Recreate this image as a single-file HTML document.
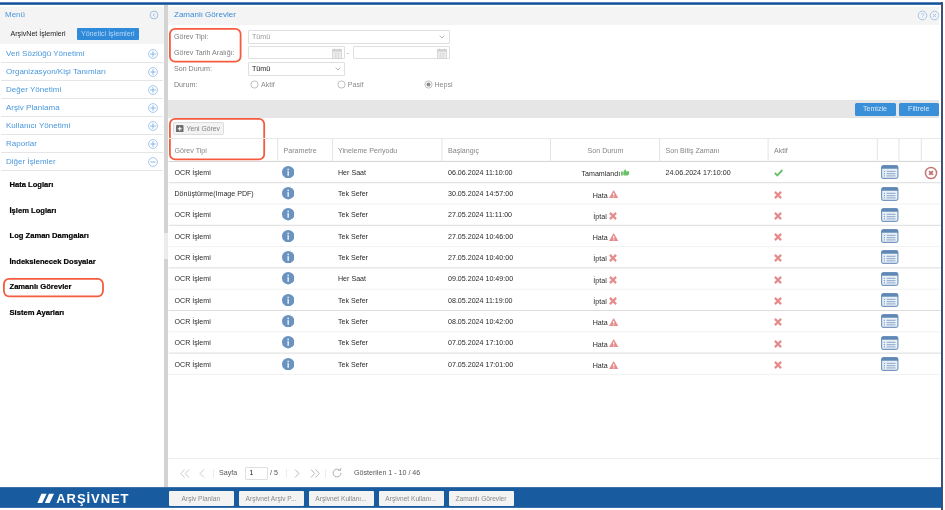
<!DOCTYPE html><html lang="tr"><head><meta charset="utf-8"><title>Zamanlı Görevler</title><style>
*{box-sizing:border-box;margin:0;padding:0}
html,body{width:945px;height:510px;overflow:hidden;background:#fff}
body{position:relative;filter:blur(0.5px);font-family:"Liberation Sans",sans-serif;font-size:7.1px;color:#333;line-height:1}
.a{position:absolute}
.t{position:absolute;white-space:nowrap;line-height:10px;height:10px}
.acc{font-size:8px;letter-spacing:0.02px;color:#4a98dc;left:6px}
.sep{position:absolute;left:1px;width:162px;height:1px;background:#e5e5e5}
.sub{font-weight:bold;font-size:7.6px;color:#000;-webkit-text-stroke:0.2px #000;left:9.5px}
.lbl{color:#7d7d7d;left:174px}
.inp{position:absolute;border:1px solid #dfdfdf;background:#fff;border-radius:1px}
.hd{color:#868686;top:145.6px}
.c{color:#2a2a2a}
.tb{position:absolute;top:491px;height:15px;width:65px;background:#f3f3f3;border-radius:1px;color:#8a8a8a;text-align:center;line-height:15px;font-size:6.6px;white-space:nowrap}
.btn{position:absolute;top:102.5px;height:13px;background:#3a8fd9;border-radius:1.5px;color:#d6e8f8;text-align:center;line-height:13px;font-size:7.1px}
</style></head><body>
<svg class="a" style="left:0;top:0" width="945" height="8" viewBox="0 0 945 8"><rect x="-2" y="2.3" width="945" height="2.5" fill="#11509a"/></svg>
<div class="a" style="left:941px;top:2px;width:2px;height:508px;background:#3f4f76"></div>
<div class="a" style="left:-4px;top:6.5px;width:168px;height:37px;background:#f4f4f4"></div>
<div class="t" style="left:5px;top:9.5px;font-size:8px;color:#4a98dc">Menü</div>
<svg class="a" style="left:149px;top:9.5px" width="10" height="10" viewBox="0 0 10 10"><circle cx="5" cy="5" r="3.9" fill="none" stroke="#8db4e0" stroke-width="0.8"/><path d="M5.7 3.4 L4.1 5 L5.7 6.6" fill="none" stroke="#8db4e0" stroke-width="0.8"/></svg>
<div class="t" style="left:10.5px;top:29px;font-size:7.1px;color:#222">ArşivNet İşlemleri</div>
<div class="a" style="left:76.5px;top:28px;width:62.5px;height:12px;background:#2f8ad9;border-radius:1px"></div>
<div class="t" style="left:76.5px;top:29px;width:62.5px;text-align:center;font-size:7.1px;color:#b9d8f5">Yönetici İşlemleri</div>
<div class="t acc" style="top:48.5px">Veri Sözlüğü Yönetimi</div>
<svg class="a" style="left:147.8px;top:48.8px" width="10" height="10" viewBox="0 0 10 10"><circle cx="5" cy="5" r="4.4" fill="none" stroke="#8fbbe9" stroke-width="0.8"/><path d="M2.2 5 H7.8 M5 2.2 V7.8" stroke="#7fb0e4" stroke-width="0.9"/></svg>
<div class="sep" style="top:62px"></div>
<div class="t acc" style="top:66.5px">Organizasyon/Kişi Tanımları</div>
<svg class="a" style="left:147.8px;top:66.8px" width="10" height="10" viewBox="0 0 10 10"><circle cx="5" cy="5" r="4.4" fill="none" stroke="#8fbbe9" stroke-width="0.8"/><path d="M2.2 5 H7.8 M5 2.2 V7.8" stroke="#7fb0e4" stroke-width="0.9"/></svg>
<div class="sep" style="top:80px"></div>
<div class="t acc" style="top:84.5px">Değer Yönetimi</div>
<svg class="a" style="left:147.8px;top:84.8px" width="10" height="10" viewBox="0 0 10 10"><circle cx="5" cy="5" r="4.4" fill="none" stroke="#8fbbe9" stroke-width="0.8"/><path d="M2.2 5 H7.8 M5 2.2 V7.8" stroke="#7fb0e4" stroke-width="0.9"/></svg>
<div class="sep" style="top:98px"></div>
<div class="t acc" style="top:102.5px">Arşiv Planlama</div>
<svg class="a" style="left:147.8px;top:102.8px" width="10" height="10" viewBox="0 0 10 10"><circle cx="5" cy="5" r="4.4" fill="none" stroke="#8fbbe9" stroke-width="0.8"/><path d="M2.2 5 H7.8 M5 2.2 V7.8" stroke="#7fb0e4" stroke-width="0.9"/></svg>
<div class="sep" style="top:116px"></div>
<div class="t acc" style="top:120.5px">Kullanıcı Yönetimi</div>
<svg class="a" style="left:147.8px;top:120.8px" width="10" height="10" viewBox="0 0 10 10"><circle cx="5" cy="5" r="4.4" fill="none" stroke="#8fbbe9" stroke-width="0.8"/><path d="M2.2 5 H7.8 M5 2.2 V7.8" stroke="#7fb0e4" stroke-width="0.9"/></svg>
<div class="sep" style="top:134px"></div>
<div class="t acc" style="top:138.5px">Raporlar</div>
<svg class="a" style="left:147.8px;top:138.8px" width="10" height="10" viewBox="0 0 10 10"><circle cx="5" cy="5" r="4.4" fill="none" stroke="#8fbbe9" stroke-width="0.8"/><path d="M2.2 5 H7.8 M5 2.2 V7.8" stroke="#7fb0e4" stroke-width="0.9"/></svg>
<div class="sep" style="top:152px"></div>
<div class="t acc" style="top:156.5px">Diğer İşlemler</div>
<svg class="a" style="left:147.8px;top:156.8px" width="10" height="10" viewBox="0 0 10 10"><circle cx="5" cy="5" r="4.4" fill="none" stroke="#8fbbe9" stroke-width="0.8"/><path d="M2.4 5 H7.6" stroke="#7fb0e4" stroke-width="0.9"/></svg>
<div class="sep" style="top:170px"></div>
<div class="t sub" style="top:179.6px">Hata Logları</div>
<div class="t sub" style="top:205.6px">İşlem Logları</div>
<div class="t sub" style="top:231.3px">Log Zaman Damgaları</div>
<div class="t sub" style="top:256.7px">İndekslenecek Dosyalar</div>
<div class="t sub" style="top:282.1px">Zamanlı Görevler</div>
<div class="t sub" style="top:308.1px">Sistem Ayarları</div>
<svg class="a" style="left:2.3px;top:276.6px" width="102.9" height="21.2" viewBox="0 0 102.9 21.2"><rect x="1.9" y="1.9" width="99.1" height="17.4" rx="5.2" fill="none" stroke="#f55c3e" stroke-width="1.8"/></svg>
<div class="a" style="left:164.3px;top:5px;width:4px;height:482px;background:#d3d3d3"></div>
<div class="a" style="left:164.3px;top:233px;width:4px;height:26px;background:#ececec"></div>
<div class="a" style="left:168px;top:6.5px;width:771px;height:18px;background:#f4f4f4"></div>
<div class="t" style="left:174px;top:10.4px;font-size:8px;color:#3b8ad6">Zamanlı Görevler</div>
<svg class="a" style="left:916.5px;top:9.5px" width="11" height="11" viewBox="0 0 11 11"><circle cx="5.5" cy="5.5" r="4.3" fill="none" stroke="#9dbfe6" stroke-width="0.9"/><text x="5.5" y="8" font-size="6.5" text-anchor="middle" fill="#9dbfe6" font-family="Liberation Sans, sans-serif">?</text></svg>
<svg class="a" style="left:928.5px;top:9.5px" width="11" height="11" viewBox="0 0 11 11"><circle cx="5.5" cy="5.5" r="4.3" fill="none" stroke="#9dbfe6" stroke-width="0.9"/><path d="M3.9 3.9 L7.1 7.1 M7.1 3.9 L3.9 7.1" stroke="#9dbfe6" stroke-width="0.9"/></svg>
<div class="t lbl" style="top:32px">Görev Tipi:</div>
<div class="t lbl" style="top:48px">Görev Tarih Aralığı:</div>
<div class="t lbl" style="top:64px">Son Durum:</div>
<div class="t lbl" style="top:80px">Durum:</div>
<div class="inp" style="left:248px;top:30px;width:201.6px;height:13.5px"></div>
<div class="t" style="left:252px;top:32px;color:#9a9a9a">Tümü</div>
<svg class="a" style="left:439px;top:35px" width="6" height="4" viewBox="0 0 6 4"><path d="M0.6 0.6 L3 3 L5.4 0.6" fill="none" stroke="#b8b8b8" stroke-width="1"/></svg>
<div class="inp" style="left:248px;top:46px;width:96.6px;height:13px"></div>
<div class="inp" style="left:353px;top:46px;width:96.6px;height:13px"></div>
<svg class="a" style="left:331.6px;top:47.5px" width="10" height="11" viewBox="0 0 10 11"><rect x="0.5" y="1.5" width="9" height="9" fill="#eeeeee" stroke="#d2d2d2" stroke-width="0.8"/><rect x="0.5" y="1.5" width="9" height="2.2" fill="#d2d2d2"/><path d="M2.5 0.5V2.5M7.5 0.5V2.5" stroke="#cccccc" stroke-width="0.8"/><path d="M2 5.5H8M2 7.2H8M2 8.9H8M3.7 4.5V10M6.3 4.5V10" stroke="#d8d8d8" stroke-width="0.5"/></svg>
<svg class="a" style="left:436.6px;top:47.5px" width="10" height="11" viewBox="0 0 10 11"><rect x="0.5" y="1.5" width="9" height="9" fill="#eeeeee" stroke="#d2d2d2" stroke-width="0.8"/><rect x="0.5" y="1.5" width="9" height="2.2" fill="#d2d2d2"/><path d="M2.5 0.5V2.5M7.5 0.5V2.5" stroke="#cccccc" stroke-width="0.8"/><path d="M2 5.5H8M2 7.2H8M2 8.9H8M3.7 4.5V10M6.3 4.5V10" stroke="#d8d8d8" stroke-width="0.5"/></svg>
<div class="t" style="left:346.5px;top:48px;color:#999">-</div>
<div class="inp" style="left:248px;top:62px;width:96.6px;height:13.5px"></div>
<div class="t" style="left:252px;top:64px;color:#222">Tümü</div>
<svg class="a" style="left:334.5px;top:67px" width="6" height="4" viewBox="0 0 6 4"><path d="M0.6 0.6 L3 3 L5.4 0.6" fill="none" stroke="#b8b8b8" stroke-width="1"/></svg>
<svg class="a" style="left:250.0px;top:80px" width="9" height="9" viewBox="0 0 9 9"><circle cx="4.5" cy="4.5" r="3.6" fill="#fff" stroke="#b0b0b0" stroke-width="0.8"/></svg>
<div class="t" style="left:261.0px;top:80px;color:#8a8a8a">Aktif</div>
<svg class="a" style="left:336.8px;top:80px" width="9" height="9" viewBox="0 0 9 9"><circle cx="4.5" cy="4.5" r="3.6" fill="#fff" stroke="#b0b0b0" stroke-width="0.8"/></svg>
<div class="t" style="left:347.8px;top:80px;color:#8a8a8a">Pasif</div>
<svg class="a" style="left:423.5px;top:80px" width="9" height="9" viewBox="0 0 9 9"><circle cx="4.5" cy="4.5" r="3.6" fill="#fff" stroke="#b0b0b0" stroke-width="0.8"/><circle cx="4.5" cy="4.5" r="2" fill="#8a8a8a"/></svg>
<div class="t" style="left:434.5px;top:80px;color:#8a8a8a">Hepsi</div>
<svg class="a" style="left:167.8px;top:26.6px" width="74.5" height="36.5" viewBox="0 0 74.5 36.5"><rect x="1.9" y="1.9" width="70.7" height="32.7" rx="5.2" fill="none" stroke="#f55c3e" stroke-width="1.8"/></svg>
<div class="a" style="left:168px;top:99.5px;width:771px;height:18.5px;background:#e6e6e6"></div>
<div class="btn" style="left:854.5px;width:41px">Temizle</div>
<div class="btn" style="left:898.5px;width:40.5px">Filtrele</div>
<div class="a" style="left:173.3px;top:122.3px;width:50.7px;height:12.8px;background:#f3f3f3;border:1px solid #dcdcdc;border-radius:1.5px"></div>
<svg class="a" style="left:176.2px;top:124.9px" width="7.5" height="7.5" viewBox="0 0 7 7"><rect x="0" y="0" width="7" height="7" rx="1" fill="#6e6e6e"/><path d="M1.6 3.5H5.4M3.5 1.6V5.4" stroke="#fff" stroke-width="1"/></svg>
<div class="t" style="left:186.6px;top:123.8px;color:#808080;font-size:6.8px">Yeni Görev</div>
<svg class="a" style="left:167.7px;top:117px" width="98.1" height="44.3" viewBox="0 0 98.1 44.3"><rect x="1.9" y="1.9" width="94.3" height="40.5" rx="5.2" fill="none" stroke="#f55c3e" stroke-width="1.8"/></svg>
<div class="t hd" style="left:174.5px">Görev Tipi</div>
<div class="t hd" style="left:283.5px">Parametre</div>
<div class="t hd" style="left:338px">Yineleme Periyodu</div>
<div class="t hd" style="left:448px">Başlangıç</div>
<div class="t hd" style="left:665.5px">Son Bitiş Zamanı</div>
<div class="t hd" style="left:774px">Aktif</div>
<div class="t hd" style="left:551px;width:109px;text-align:center">Son Durum</div>
<div class="t c" style="left:174.5px;top:167.8px">OCR İşlemi</div>
<svg class="a" style="left:281.5px;top:165.8px" width="12.4" height="12.4" viewBox="0 0 12 12"><circle cx="6" cy="6" r="6" fill="#6b93bf"/><circle cx="6" cy="3.3" r="0.85" fill="#e4ecf4"/><rect x="5.25" y="4.9" width="1.5" height="4.6" rx="0.4" fill="#e4ecf4"/></svg>
<div class="t c" style="left:338px;top:167.8px">Her Saat</div>
<div class="t c" style="left:448px;top:167.8px">06.06.2024 11:10:00</div>
<div class="t c" style="left:581.5px;top:169.2px">Tamamlandı</div>
<svg class="a" style="left:621.3px;top:169.2px" width="8.5" height="6.5" viewBox="0 0 17 13"><rect x="0" y="5" width="3.6" height="8" fill="#68c268"/><path d="M4.6 5.5 C6.5 4 7 2 7.4 0.4 C9.6 0 10.4 2.2 9.6 4.6 H15 C17 4.6 17 7 15.8 7.2 C17 8 16.6 9.6 15.4 9.8 C16 10.8 15.4 12 14.4 12.1 C14.4 12.8 13.6 13 13 13 H7 C6 13 5.4 12.4 4.6 12.2 Z" fill="#68c268"/></svg>
<div class="t c" style="left:665.5px;top:167.8px">24.06.2024 17:10:00</div>
<svg class="a" style="left:774px;top:169.1px" width="9" height="7.5" viewBox="0 0 9 7.5"><path d="M0.8 4 L3.3 6.4 L8.3 1" fill="none" stroke="#69c269" stroke-width="1.9"/></svg>
<svg class="a" style="left:881px;top:165.2px" width="17.5" height="14" viewBox="0 0 17.5 14"><rect x="0.6" y="0.6" width="16.3" height="12.8" rx="1.8" fill="#ebf0f6" stroke="#7699c2" stroke-width="1.2"/><path d="M0.6 2.4 Q0.6 0.6 2.4 0.6 H15.1 Q16.9 0.6 16.9 2.4 V3.8 H0.6 Z" fill="#5f88b6"/><path d="M5.5 6.3H14.5M5.5 8.6H14.5M5.5 10.9H14.5" stroke="#9bb4d3" stroke-width="1.2"/><path d="M2.8 6.3H4M2.8 8.6H4M2.8 10.9H4" stroke="#86a5ca" stroke-width="1.2"/></svg>
<svg class="a" style="left:924px;top:165.7px" width="14" height="14" viewBox="0 0 14 14"><circle cx="7" cy="7" r="5.6" fill="#fff" stroke="#c47676" stroke-width="1.5"/><path d="M5.1 5.1 L8.9 8.9 M8.9 5.1 L5.1 8.9" stroke="#c47676" stroke-width="2"/></svg>
<div class="t c" style="left:174.5px;top:189.1px">Dönüştürme(Image PDF)</div>
<svg class="a" style="left:281.5px;top:187.2px" width="12.4" height="12.4" viewBox="0 0 12 12"><circle cx="6" cy="6" r="6" fill="#6b93bf"/><circle cx="6" cy="3.3" r="0.85" fill="#e4ecf4"/><rect x="5.25" y="4.9" width="1.5" height="4.6" rx="0.4" fill="#e4ecf4"/></svg>
<div class="t c" style="left:338px;top:189.1px">Tek Sefer</div>
<div class="t c" style="left:448px;top:189.1px">30.05.2024 14:57:00</div>
<div class="t c" style="left:592.7px;top:190.5px">Hata</div>
<svg class="a" style="left:609.3px;top:190.1px" width="9.4" height="8.4" viewBox="0 0 9.4 8.4"><path d="M4.7 0.6 L9 8 H0.4 Z" fill="#e68c8c" stroke="#e68c8c" stroke-width="0.6" stroke-linejoin="round"/><path d="M4.7 3V5.6" stroke="#fff" stroke-width="1.1"/><circle cx="4.7" cy="6.8" r="0.6" fill="#fff"/></svg>
<svg class="a" style="left:774px;top:190.5px" width="8" height="8" viewBox="0 0 8 8"><path d="M0.9 0.9 L7.1 7.1 M7.1 0.9 L0.9 7.1" fill="none" stroke="#e68c8c" stroke-width="2.2"/></svg>
<svg class="a" style="left:881px;top:186.5px" width="17.5" height="14" viewBox="0 0 17.5 14"><rect x="0.6" y="0.6" width="16.3" height="12.8" rx="1.8" fill="#ebf0f6" stroke="#7699c2" stroke-width="1.2"/><path d="M0.6 2.4 Q0.6 0.6 2.4 0.6 H15.1 Q16.9 0.6 16.9 2.4 V3.8 H0.6 Z" fill="#5f88b6"/><path d="M5.5 6.3H14.5M5.5 8.6H14.5M5.5 10.9H14.5" stroke="#9bb4d3" stroke-width="1.2"/><path d="M2.8 6.3H4M2.8 8.6H4M2.8 10.9H4" stroke="#86a5ca" stroke-width="1.2"/></svg>
<div class="t c" style="left:174.5px;top:210.3px">OCR İşlemi</div>
<svg class="a" style="left:281.5px;top:208.4px" width="12.4" height="12.4" viewBox="0 0 12 12"><circle cx="6" cy="6" r="6" fill="#6b93bf"/><circle cx="6" cy="3.3" r="0.85" fill="#e4ecf4"/><rect x="5.25" y="4.9" width="1.5" height="4.6" rx="0.4" fill="#e4ecf4"/></svg>
<div class="t c" style="left:338px;top:210.3px">Tek Sefer</div>
<div class="t c" style="left:448px;top:210.3px">27.05.2024 11:11:00</div>
<div class="t c" style="left:593.3px;top:211.8px">İptal</div>
<svg class="a" style="left:609.3px;top:211.8px" width="8" height="8" viewBox="0 0 8 8"><path d="M0.9 0.9 L7.1 7.1 M7.1 0.9 L0.9 7.1" fill="none" stroke="#e68c8c" stroke-width="2.2"/></svg>
<svg class="a" style="left:774px;top:211.8px" width="8" height="8" viewBox="0 0 8 8"><path d="M0.9 0.9 L7.1 7.1 M7.1 0.9 L0.9 7.1" fill="none" stroke="#e68c8c" stroke-width="2.2"/></svg>
<svg class="a" style="left:881px;top:207.8px" width="17.5" height="14" viewBox="0 0 17.5 14"><rect x="0.6" y="0.6" width="16.3" height="12.8" rx="1.8" fill="#ebf0f6" stroke="#7699c2" stroke-width="1.2"/><path d="M0.6 2.4 Q0.6 0.6 2.4 0.6 H15.1 Q16.9 0.6 16.9 2.4 V3.8 H0.6 Z" fill="#5f88b6"/><path d="M5.5 6.3H14.5M5.5 8.6H14.5M5.5 10.9H14.5" stroke="#9bb4d3" stroke-width="1.2"/><path d="M2.8 6.3H4M2.8 8.6H4M2.8 10.9H4" stroke="#86a5ca" stroke-width="1.2"/></svg>
<div class="t c" style="left:174.5px;top:231.7px">OCR İşlemi</div>
<svg class="a" style="left:281.5px;top:229.8px" width="12.4" height="12.4" viewBox="0 0 12 12"><circle cx="6" cy="6" r="6" fill="#6b93bf"/><circle cx="6" cy="3.3" r="0.85" fill="#e4ecf4"/><rect x="5.25" y="4.9" width="1.5" height="4.6" rx="0.4" fill="#e4ecf4"/></svg>
<div class="t c" style="left:338px;top:231.7px">Tek Sefer</div>
<div class="t c" style="left:448px;top:231.7px">27.05.2024 10:46:00</div>
<div class="t c" style="left:592.7px;top:233.1px">Hata</div>
<svg class="a" style="left:609.3px;top:232.7px" width="9.4" height="8.4" viewBox="0 0 9.4 8.4"><path d="M4.7 0.6 L9 8 H0.4 Z" fill="#e68c8c" stroke="#e68c8c" stroke-width="0.6" stroke-linejoin="round"/><path d="M4.7 3V5.6" stroke="#fff" stroke-width="1.1"/><circle cx="4.7" cy="6.8" r="0.6" fill="#fff"/></svg>
<svg class="a" style="left:774px;top:233.1px" width="8" height="8" viewBox="0 0 8 8"><path d="M0.9 0.9 L7.1 7.1 M7.1 0.9 L0.9 7.1" fill="none" stroke="#e68c8c" stroke-width="2.2"/></svg>
<svg class="a" style="left:881px;top:229.1px" width="17.5" height="14" viewBox="0 0 17.5 14"><rect x="0.6" y="0.6" width="16.3" height="12.8" rx="1.8" fill="#ebf0f6" stroke="#7699c2" stroke-width="1.2"/><path d="M0.6 2.4 Q0.6 0.6 2.4 0.6 H15.1 Q16.9 0.6 16.9 2.4 V3.8 H0.6 Z" fill="#5f88b6"/><path d="M5.5 6.3H14.5M5.5 8.6H14.5M5.5 10.9H14.5" stroke="#9bb4d3" stroke-width="1.2"/><path d="M2.8 6.3H4M2.8 8.6H4M2.8 10.9H4" stroke="#86a5ca" stroke-width="1.2"/></svg>
<div class="t c" style="left:174.5px;top:252.9px">OCR İşlemi</div>
<svg class="a" style="left:281.5px;top:251.0px" width="12.4" height="12.4" viewBox="0 0 12 12"><circle cx="6" cy="6" r="6" fill="#6b93bf"/><circle cx="6" cy="3.3" r="0.85" fill="#e4ecf4"/><rect x="5.25" y="4.9" width="1.5" height="4.6" rx="0.4" fill="#e4ecf4"/></svg>
<div class="t c" style="left:338px;top:252.9px">Tek Sefer</div>
<div class="t c" style="left:448px;top:252.9px">27.05.2024 10:40:00</div>
<div class="t c" style="left:593.3px;top:254.3px">İptal</div>
<svg class="a" style="left:609.3px;top:254.3px" width="8" height="8" viewBox="0 0 8 8"><path d="M0.9 0.9 L7.1 7.1 M7.1 0.9 L0.9 7.1" fill="none" stroke="#e68c8c" stroke-width="2.2"/></svg>
<svg class="a" style="left:774px;top:254.3px" width="8" height="8" viewBox="0 0 8 8"><path d="M0.9 0.9 L7.1 7.1 M7.1 0.9 L0.9 7.1" fill="none" stroke="#e68c8c" stroke-width="2.2"/></svg>
<svg class="a" style="left:881px;top:250.3px" width="17.5" height="14" viewBox="0 0 17.5 14"><rect x="0.6" y="0.6" width="16.3" height="12.8" rx="1.8" fill="#ebf0f6" stroke="#7699c2" stroke-width="1.2"/><path d="M0.6 2.4 Q0.6 0.6 2.4 0.6 H15.1 Q16.9 0.6 16.9 2.4 V3.8 H0.6 Z" fill="#5f88b6"/><path d="M5.5 6.3H14.5M5.5 8.6H14.5M5.5 10.9H14.5" stroke="#9bb4d3" stroke-width="1.2"/><path d="M2.8 6.3H4M2.8 8.6H4M2.8 10.9H4" stroke="#86a5ca" stroke-width="1.2"/></svg>
<div class="t c" style="left:174.5px;top:274.2px">OCR İşlemi</div>
<svg class="a" style="left:281.5px;top:272.4px" width="12.4" height="12.4" viewBox="0 0 12 12"><circle cx="6" cy="6" r="6" fill="#6b93bf"/><circle cx="6" cy="3.3" r="0.85" fill="#e4ecf4"/><rect x="5.25" y="4.9" width="1.5" height="4.6" rx="0.4" fill="#e4ecf4"/></svg>
<div class="t c" style="left:338px;top:274.2px">Her Saat</div>
<div class="t c" style="left:448px;top:274.2px">09.05.2024 10:49:00</div>
<div class="t c" style="left:593.3px;top:275.6px">İptal</div>
<svg class="a" style="left:609.3px;top:275.6px" width="8" height="8" viewBox="0 0 8 8"><path d="M0.9 0.9 L7.1 7.1 M7.1 0.9 L0.9 7.1" fill="none" stroke="#e68c8c" stroke-width="2.2"/></svg>
<svg class="a" style="left:774px;top:275.6px" width="8" height="8" viewBox="0 0 8 8"><path d="M0.9 0.9 L7.1 7.1 M7.1 0.9 L0.9 7.1" fill="none" stroke="#e68c8c" stroke-width="2.2"/></svg>
<svg class="a" style="left:881px;top:271.6px" width="17.5" height="14" viewBox="0 0 17.5 14"><rect x="0.6" y="0.6" width="16.3" height="12.8" rx="1.8" fill="#ebf0f6" stroke="#7699c2" stroke-width="1.2"/><path d="M0.6 2.4 Q0.6 0.6 2.4 0.6 H15.1 Q16.9 0.6 16.9 2.4 V3.8 H0.6 Z" fill="#5f88b6"/><path d="M5.5 6.3H14.5M5.5 8.6H14.5M5.5 10.9H14.5" stroke="#9bb4d3" stroke-width="1.2"/><path d="M2.8 6.3H4M2.8 8.6H4M2.8 10.9H4" stroke="#86a5ca" stroke-width="1.2"/></svg>
<div class="t c" style="left:174.5px;top:295.6px">OCR İşlemi</div>
<svg class="a" style="left:281.5px;top:293.7px" width="12.4" height="12.4" viewBox="0 0 12 12"><circle cx="6" cy="6" r="6" fill="#6b93bf"/><circle cx="6" cy="3.3" r="0.85" fill="#e4ecf4"/><rect x="5.25" y="4.9" width="1.5" height="4.6" rx="0.4" fill="#e4ecf4"/></svg>
<div class="t c" style="left:338px;top:295.6px">Tek Sefer</div>
<div class="t c" style="left:448px;top:295.6px">08.05.2024 11:19:00</div>
<div class="t c" style="left:593.3px;top:296.9px">İptal</div>
<svg class="a" style="left:609.3px;top:296.9px" width="8" height="8" viewBox="0 0 8 8"><path d="M0.9 0.9 L7.1 7.1 M7.1 0.9 L0.9 7.1" fill="none" stroke="#e68c8c" stroke-width="2.2"/></svg>
<svg class="a" style="left:774px;top:296.9px" width="8" height="8" viewBox="0 0 8 8"><path d="M0.9 0.9 L7.1 7.1 M7.1 0.9 L0.9 7.1" fill="none" stroke="#e68c8c" stroke-width="2.2"/></svg>
<svg class="a" style="left:881px;top:292.9px" width="17.5" height="14" viewBox="0 0 17.5 14"><rect x="0.6" y="0.6" width="16.3" height="12.8" rx="1.8" fill="#ebf0f6" stroke="#7699c2" stroke-width="1.2"/><path d="M0.6 2.4 Q0.6 0.6 2.4 0.6 H15.1 Q16.9 0.6 16.9 2.4 V3.8 H0.6 Z" fill="#5f88b6"/><path d="M5.5 6.3H14.5M5.5 8.6H14.5M5.5 10.9H14.5" stroke="#9bb4d3" stroke-width="1.2"/><path d="M2.8 6.3H4M2.8 8.6H4M2.8 10.9H4" stroke="#86a5ca" stroke-width="1.2"/></svg>
<div class="t c" style="left:174.5px;top:316.9px">OCR İşlemi</div>
<svg class="a" style="left:281.5px;top:315.0px" width="12.4" height="12.4" viewBox="0 0 12 12"><circle cx="6" cy="6" r="6" fill="#6b93bf"/><circle cx="6" cy="3.3" r="0.85" fill="#e4ecf4"/><rect x="5.25" y="4.9" width="1.5" height="4.6" rx="0.4" fill="#e4ecf4"/></svg>
<div class="t c" style="left:338px;top:316.9px">Tek Sefer</div>
<div class="t c" style="left:448px;top:316.9px">08.05.2024 10:42:00</div>
<div class="t c" style="left:592.7px;top:318.2px">Hata</div>
<svg class="a" style="left:609.3px;top:317.9px" width="9.4" height="8.4" viewBox="0 0 9.4 8.4"><path d="M4.7 0.6 L9 8 H0.4 Z" fill="#e68c8c" stroke="#e68c8c" stroke-width="0.6" stroke-linejoin="round"/><path d="M4.7 3V5.6" stroke="#fff" stroke-width="1.1"/><circle cx="4.7" cy="6.8" r="0.6" fill="#fff"/></svg>
<svg class="a" style="left:774px;top:318.2px" width="8" height="8" viewBox="0 0 8 8"><path d="M0.9 0.9 L7.1 7.1 M7.1 0.9 L0.9 7.1" fill="none" stroke="#e68c8c" stroke-width="2.2"/></svg>
<svg class="a" style="left:881px;top:314.2px" width="17.5" height="14" viewBox="0 0 17.5 14"><rect x="0.6" y="0.6" width="16.3" height="12.8" rx="1.8" fill="#ebf0f6" stroke="#7699c2" stroke-width="1.2"/><path d="M0.6 2.4 Q0.6 0.6 2.4 0.6 H15.1 Q16.9 0.6 16.9 2.4 V3.8 H0.6 Z" fill="#5f88b6"/><path d="M5.5 6.3H14.5M5.5 8.6H14.5M5.5 10.9H14.5" stroke="#9bb4d3" stroke-width="1.2"/><path d="M2.8 6.3H4M2.8 8.6H4M2.8 10.9H4" stroke="#86a5ca" stroke-width="1.2"/></svg>
<div class="t c" style="left:174.5px;top:338.1px">OCR İşlemi</div>
<svg class="a" style="left:281.5px;top:336.2px" width="12.4" height="12.4" viewBox="0 0 12 12"><circle cx="6" cy="6" r="6" fill="#6b93bf"/><circle cx="6" cy="3.3" r="0.85" fill="#e4ecf4"/><rect x="5.25" y="4.9" width="1.5" height="4.6" rx="0.4" fill="#e4ecf4"/></svg>
<div class="t c" style="left:338px;top:338.1px">Tek Sefer</div>
<div class="t c" style="left:448px;top:338.1px">07.05.2024 17:10:00</div>
<div class="t c" style="left:592.7px;top:339.5px">Hata</div>
<svg class="a" style="left:609.3px;top:339.1px" width="9.4" height="8.4" viewBox="0 0 9.4 8.4"><path d="M4.7 0.6 L9 8 H0.4 Z" fill="#e68c8c" stroke="#e68c8c" stroke-width="0.6" stroke-linejoin="round"/><path d="M4.7 3V5.6" stroke="#fff" stroke-width="1.1"/><circle cx="4.7" cy="6.8" r="0.6" fill="#fff"/></svg>
<svg class="a" style="left:774px;top:339.5px" width="8" height="8" viewBox="0 0 8 8"><path d="M0.9 0.9 L7.1 7.1 M7.1 0.9 L0.9 7.1" fill="none" stroke="#e68c8c" stroke-width="2.2"/></svg>
<svg class="a" style="left:881px;top:335.5px" width="17.5" height="14" viewBox="0 0 17.5 14"><rect x="0.6" y="0.6" width="16.3" height="12.8" rx="1.8" fill="#ebf0f6" stroke="#7699c2" stroke-width="1.2"/><path d="M0.6 2.4 Q0.6 0.6 2.4 0.6 H15.1 Q16.9 0.6 16.9 2.4 V3.8 H0.6 Z" fill="#5f88b6"/><path d="M5.5 6.3H14.5M5.5 8.6H14.5M5.5 10.9H14.5" stroke="#9bb4d3" stroke-width="1.2"/><path d="M2.8 6.3H4M2.8 8.6H4M2.8 10.9H4" stroke="#86a5ca" stroke-width="1.2"/></svg>
<div class="t c" style="left:174.5px;top:359.5px">OCR İşlemi</div>
<svg class="a" style="left:281.5px;top:357.6px" width="12.4" height="12.4" viewBox="0 0 12 12"><circle cx="6" cy="6" r="6" fill="#6b93bf"/><circle cx="6" cy="3.3" r="0.85" fill="#e4ecf4"/><rect x="5.25" y="4.9" width="1.5" height="4.6" rx="0.4" fill="#e4ecf4"/></svg>
<div class="t c" style="left:338px;top:359.5px">Tek Sefer</div>
<div class="t c" style="left:448px;top:359.5px">07.05.2024 17:01:00</div>
<div class="t c" style="left:592.7px;top:360.9px">Hata</div>
<svg class="a" style="left:609.3px;top:360.5px" width="9.4" height="8.4" viewBox="0 0 9.4 8.4"><path d="M4.7 0.6 L9 8 H0.4 Z" fill="#e68c8c" stroke="#e68c8c" stroke-width="0.6" stroke-linejoin="round"/><path d="M4.7 3V5.6" stroke="#fff" stroke-width="1.1"/><circle cx="4.7" cy="6.8" r="0.6" fill="#fff"/></svg>
<svg class="a" style="left:774px;top:360.9px" width="8" height="8" viewBox="0 0 8 8"><path d="M0.9 0.9 L7.1 7.1 M7.1 0.9 L0.9 7.1" fill="none" stroke="#e68c8c" stroke-width="2.2"/></svg>
<svg class="a" style="left:881px;top:356.9px" width="17.5" height="14" viewBox="0 0 17.5 14"><rect x="0.6" y="0.6" width="16.3" height="12.8" rx="1.8" fill="#ebf0f6" stroke="#7699c2" stroke-width="1.2"/><path d="M0.6 2.4 Q0.6 0.6 2.4 0.6 H15.1 Q16.9 0.6 16.9 2.4 V3.8 H0.6 Z" fill="#5f88b6"/><path d="M5.5 6.3H14.5M5.5 8.6H14.5M5.5 10.9H14.5" stroke="#9bb4d3" stroke-width="1.2"/><path d="M2.8 6.3H4M2.8 8.6H4M2.8 10.9H4" stroke="#86a5ca" stroke-width="1.2"/></svg>
<svg class="a" style="left:179.5px;top:468.5px" width="10" height="9" viewBox="0 0 10 9"><path d="M4.5 0.5 L0.8 4.5 L4.5 8.5 M9 0.5 L5.3 4.5 L9 8.5" fill="none" stroke="#bdbdbd" stroke-width="0.8"/></svg>
<svg class="a" style="left:199px;top:468.5px" width="6" height="9" viewBox="0 0 6 9"><path d="M5 0.5 L1 4.5 L5 8.5" fill="none" stroke="#bdbdbd" stroke-width="0.8"/></svg>
<svg class="a" style="left:293.5px;top:468.5px" width="6" height="9" viewBox="0 0 6 9"><path d="M1 0.5 L5 4.5 L1 8.5" fill="none" stroke="#a4a4a4" stroke-width="0.8"/></svg>
<svg class="a" style="left:309.5px;top:468.5px" width="10" height="9" viewBox="0 0 10 9"><path d="M1 0.5 L4.7 4.5 L1 8.5 M5.5 0.5 L9.2 4.5 L5.5 8.5" fill="none" stroke="#a4a4a4" stroke-width="0.8"/></svg>
<div class="a" style="left:212.5px;top:468.5px;width:1px;height:9px;background:#ececec"></div>
<div class="a" style="left:286px;top:468.5px;width:1px;height:9px;background:#ececec"></div>
<div class="a" style="left:325px;top:468.5px;width:1px;height:9px;background:#ececec"></div>
<div class="t" style="left:219px;top:468px;color:#555">Sayfa</div>
<div class="inp" style="left:245px;top:466.5px;width:23px;height:13.5px"></div>
<div class="t" style="left:249.5px;top:468px;color:#222">1</div>
<div class="t" style="left:270px;top:468px;color:#555">/ 5</div>
<svg class="a" style="left:331.8px;top:468.2px" width="10" height="10" viewBox="0 0 10 10"><path d="M8.9 5 A3.9 3.9 0 1 1 7.2 1.8" fill="none" stroke="#a6a6a6" stroke-width="0.9"/><path d="M6.2 2.3 H8.6 V0" fill="none" stroke="#a6a6a6" stroke-width="0.9" transform="rotate(8 7.4 1.8)"/></svg>
<div class="t" style="left:354px;top:468px;color:#555">Gösterilen 1 - 10 / 46</div>
<svg class="a" style="left:0;top:484px" width="945" height="26" viewBox="0 0 945 26"><rect x="-4" y="3.2" width="945.6" height="20.6" fill="#0f4f95"/><rect x="-4" y="4" width="945.6" height="19" fill="#185b9f"/></svg>
<svg class="a" style="left:36px;top:489px" width="96" height="18" viewBox="0 0 96 18"><path d="M5.4 4.7 H10.6 L6.2 14 H1.4 Z M13 4.7 H18 L13.6 14 H8.8 Z" fill="#fff"/><text x="20.3" y="14.4" font-family="Liberation Sans, sans-serif" font-weight="bold" font-size="13" fill="#fff" textLength="72.2" lengthAdjust="spacing">ARŞİVNET</text></svg>
<div class="tb" style="left:168.5px">Arşiv Planları</div>
<div class="tb" style="left:238.5px">Arşivnet Arşiv P...</div>
<div class="tb" style="left:308.5px">Arşivnet Kullanı...</div>
<div class="tb" style="left:378.5px">Arşivnet Kullanı...</div>
<div class="tb" style="left:448.5px">Zamanlı Görevler</div>
<svg class="a" style="left:0;top:0" width="945" height="510" viewBox="0 0 945 510"><rect x="168.6" y="138.00" width="772.4" height="1" fill="#e8e8e8"/><rect x="168.6" y="160.90" width="772.4" height="1" fill="#d2d2d2"/><rect x="277.10" y="138.5" width="1" height="23" fill="#e4e4e4"/><rect x="332.10" y="138.5" width="1" height="23" fill="#e4e4e4"/><rect x="441.50" y="138.5" width="1" height="23" fill="#e4e4e4"/><rect x="550.00" y="138.5" width="1" height="23" fill="#e4e4e4"/><rect x="659.10" y="138.5" width="1" height="23" fill="#e4e4e4"/><rect x="767.60" y="138.5" width="1" height="23" fill="#e4e4e4"/><rect x="876.80" y="138.5" width="1" height="23" fill="#e4e4e4"/><rect x="898.50" y="138.5" width="1" height="23" fill="#e4e4e4"/><rect x="920.80" y="138.5" width="1" height="23" fill="#e4e4e4"/><rect x="168.6" y="182.20" width="772.4" height="1" fill="#dcdcdc"/><rect x="168.6" y="203.50" width="772.4" height="1" fill="#f2f2f2"/><rect x="168.6" y="224.80" width="772.4" height="1" fill="#dcdcdc"/><rect x="168.6" y="246.10" width="772.4" height="1" fill="#f2f2f2"/><rect x="168.6" y="267.40" width="772.4" height="1" fill="#dcdcdc"/><rect x="168.6" y="288.70" width="772.4" height="1" fill="#f2f2f2"/><rect x="168.6" y="310.00" width="772.4" height="1" fill="#dcdcdc"/><rect x="168.6" y="331.30" width="772.4" height="1" fill="#f2f2f2"/><rect x="168.6" y="352.60" width="772.4" height="1" fill="#dcdcdc"/><rect x="168.6" y="373.90" width="772.4" height="1" fill="#f2f2f2"/><rect x="168.6" y="458.10" width="772.4" height="1" fill="#ebebeb"/></svg>
</body></html>
